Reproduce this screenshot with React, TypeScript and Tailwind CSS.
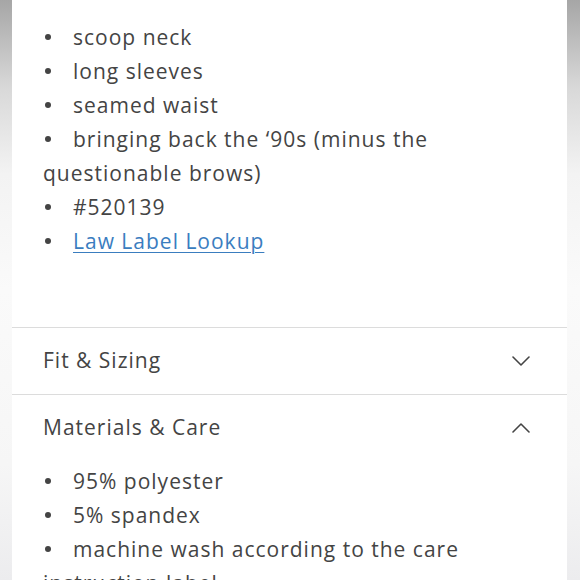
import React from "react";

const Dot = () => (
  <span className="inline-block w-[6px] h-[6px] rounded-full bg-[#444] align-middle ml-[2px] mr-[22px] relative top-[-2px]" />
);

const Item = ({ children }: { children: React.ReactNode }) => (
  <li className="leading-[34px]">
    <Dot />
    {children}
  </li>
);

const ChevronDown = () => (
  <svg width="18" height="10" viewBox="0 0 18 10" fill="none" stroke="#444" strokeWidth="1.6" strokeLinecap="round" strokeLinejoin="round">
    <path d="M1 1 L9 9 L17 1" />
  </svg>
);

const ChevronUp = () => (
  <svg width="18" height="10" viewBox="0 0 18 10" fill="none" stroke="#444" strokeWidth="1.6" strokeLinecap="round" strokeLinejoin="round">
    <path d="M1 9 L9 1 L17 9" />
  </svg>
);

export default function App() {
  return (
    <div className="flex w-[580px] h-[580px] overflow-hidden bg-white" style={{ fontFamily: '"Open Sans", "Liberation Sans", sans-serif' }}>
      <div className="w-[12px] shrink-0 bg-[linear-gradient(to_bottom,#a6a6a6,#d8d8d8_15%,#f3f3f3_30%,#fafafa_50%,#f6f6f6_80%,#ececee)]" />
      <div className="flex-1 bg-white text-[21px] text-[#444] tracking-[1px]">
        <ul className="pt-[20px] pl-[31px] pr-[37px]">
          <Item>scoop neck</Item>
          <Item>long sleeves</Item>
          <Item>seamed waist</Item>
          <Item>bringing back the ‘90s (minus the questionable brows)</Item>
          <Item>#520139</Item>
          <Item>
            <a className="text-[#3a7dbf] underline underline-offset-[3px] decoration-[1px]" href="#">Law Label Lookup</a>
          </Item>
        </ul>
        <div className="mt-[69px] border-t border-[#dcdcdc] h-[67px] flex items-center justify-between pl-[31px] pr-[37px]">
          <span>Fit &amp; Sizing</span>
          <ChevronDown />
        </div>
        <div className="border-t border-[#dcdcdc] h-[67px] flex items-center justify-between pl-[31px] pr-[37px]">
          <span>Materials &amp; Care</span>
          <ChevronUp />
        </div>
        <ul className="pt-[3px] pl-[31px] pr-[37px]">
          <Item>95% polyester</Item>
          <Item>5% spandex</Item>
          <Item>machine wash according to the care instruction label</Item>
        </ul>
      </div>
      <div className="w-[13px] shrink-0 bg-[linear-gradient(to_bottom,#a6a6a6,#d8d8d8_15%,#f3f3f3_30%,#fafafa_50%,#f6f6f6_80%,#ececee)]" />
    </div>
  );
}
